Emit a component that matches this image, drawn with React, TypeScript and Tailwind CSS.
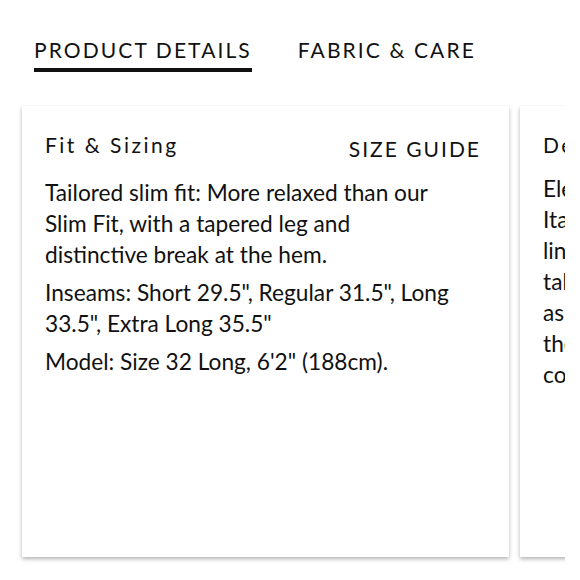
const font = { fontFamily: 'Lato, "Open Sans", sans-serif' };

function Card({
  title,
  action,
  children,
}: {
  title: string;
  action?: string;
  children: React.ReactNode;
}) {
  return (
    <div className="w-[487px] shrink-0 bg-white px-[23px] pt-[24px] shadow-[0_2px_4px_rgba(0,0,0,0.3)]">
      <div className="flex items-start justify-between">
        <h3 className="text-[21px] leading-[30px] tracking-[2.5px] text-[#111]">{title}</h3>
        {action && (
          <a className="mr-[5px] mt-[4px] text-[21px] leading-[30px] tracking-[2px] text-[#111]">{action}</a>
        )}
      </div>
      <div className="mt-[13px] flex max-w-[410px] flex-col gap-[7px] text-[22.7px] leading-[31px] text-[#111]">
        {children}
      </div>
    </div>
  );
}

export default function App() {
  return (
    <div className="h-[580px] w-[580px] bg-white" style={font}>
      <div className="flex gap-[46px] px-[34px] pt-[35px]">
        <div className="flex flex-col">
          <span className="text-[21px] leading-[30px] tracking-[2.1px] text-[#111]">PRODUCT DETAILS</span>
          <span className="mt-[3px] h-[4px] w-full bg-[#111]" />
        </div>
        <span className="text-[21px] leading-[30px] tracking-[2.1px] text-[#111]">FABRIC &amp; CARE</span>
      </div>
      <div className="mt-[33px] w-[565px] overflow-hidden">
        <div className="flex h-[458px] gap-[11px] pb-[6px] pl-[22px] pt-[1px]">
          <Card title="Fit & Sizing" action="SIZE GUIDE">
            <p>
              Tailored slim fit: More relaxed than our Slim Fit, with a tapered leg and
              distinctive break at the hem.
            </p>
            <p>Inseams: Short 29.5", Regular 31.5", Long 33.5", Extra Long 35.5"</p>
            <p>Model: Size 32 Long, 6'2" (188cm).</p>
          </Card>
          <Card title="Details">
            <p className="whitespace-nowrap">
              Elevated stretch wool from a renowned
              <br />
              Italian mill, with a half canvas build,
              <br />
              lining for a smooth finish, and a
              <br />
              tab waistband that is as refined
              <br />
              as it is comfortable. Pair it with
              <br />
              the matching jacket for a sharp
              <br />
              coordinated suit.
            </p>
          </Card>
        </div>
      </div>
    </div>
  );
}
